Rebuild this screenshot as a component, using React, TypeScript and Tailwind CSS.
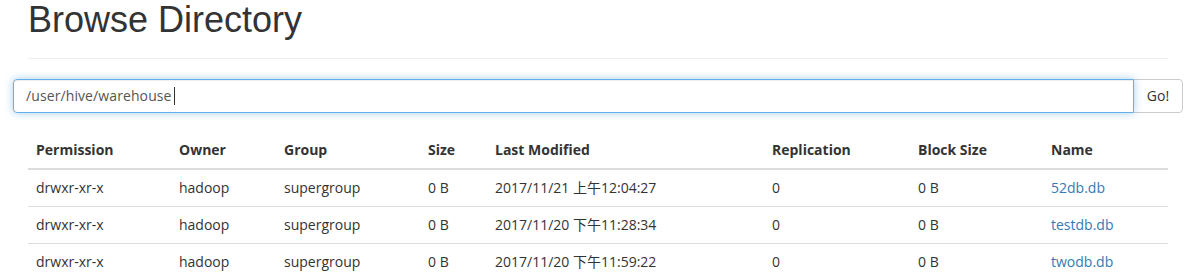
import React from 'react';

interface Entry {
  permission: string;
  owner: string;
  group: string;
  size: string;
  modified: string;
  replication: string;
  blockSize: string;
  name: string;
}

const entries: Entry[] = [
  { permission: 'drwxr-xr-x', owner: 'hadoop', group: 'supergroup', size: '0 B', modified: '2017/11/21 上午12:04:27', replication: '0', blockSize: '0 B', name: '52db.db' },
  { permission: 'drwxr-xr-x', owner: 'hadoop', group: 'supergroup', size: '0 B', modified: '2017/11/20 下午11:28:34', replication: '0', blockSize: '0 B', name: 'testdb.db' },
  { permission: 'drwxr-xr-x', owner: 'hadoop', group: 'supergroup', size: '0 B', modified: '2017/11/20 下午11:59:22', replication: '0', blockSize: '0 B', name: 'twodb.db' },
];

const bodyFont = "font-['Open_Sans','Noto_Sans_CJK_SC',sans-serif]";

const App: React.FC = () => {
  return (
    <div className={`w-[1189px] h-[278px] overflow-hidden bg-white text-[#333] ${bodyFont}`}>
      <div className="ml-[28px] w-[1140px]">
        {/* page header */}
        <div className="border-b border-[#eee] pb-[8px]">
          <h1 className="font-['Liberation_Sans',Arial,sans-serif] text-[36px] leading-[39.6px] font-medium mb-[10px]">
            Browse Directory
          </h1>
        </div>

        {/* path input */}
        <div className="-mx-[15px] mt-[20px] flex h-[34px]">
          <div className="flex-1 flex items-center rounded-l-[4px] border border-[#66afe9] px-[12px] text-[14px] tracking-[0.1px] text-[#555] shadow-[inset_0_1px_1px_rgba(0,0,0,0.075),0_0_8px_rgba(102,175,233,0.6)] z-10">
            <span>/user/hive/warehouse</span>
            <span className="ml-[2px] inline-block h-[18px] w-px bg-[#333]"></span>
          </div>
          <button className="-ml-px w-[50px] rounded-r-[4px] border border-[#ccc] bg-white text-[14px] text-[#333]">
            Go!
          </button>
        </div>

        {/* listing */}
        <table className="mt-[19px] w-[1140px] table-fixed border-collapse text-[14px] leading-[20px]">
          <colgroup>
            <col className="w-[143px]" />
            <col className="w-[105px]" />
            <col className="w-[144px]" />
            <col className="w-[67px]" />
            <col className="w-[277px]" />
            <col className="w-[146px]" />
            <col className="w-[133px]" />
            <col className="w-[125px]" />
          </colgroup>
          <thead>
            <tr className="border-b-2 border-[#ddd] text-left">
              <th className="p-[8px] font-bold">Permission</th>
              <th className="p-[8px] font-bold">Owner</th>
              <th className="p-[8px] font-bold">Group</th>
              <th className="p-[8px] font-bold">Size</th>
              <th className="p-[8px] font-bold">Last Modified</th>
              <th className="p-[8px] font-bold">Replication</th>
              <th className="p-[8px] font-bold">Block Size</th>
              <th className="p-[8px] font-bold">Name</th>
            </tr>
          </thead>
          <tbody>
            {entries.map((e) => (
              <tr key={e.name} className="border-t border-[#ddd]">
                <td className="p-[8px]">{e.permission}</td>
                <td className="p-[8px]">{e.owner}</td>
                <td className="p-[8px]">{e.group}</td>
                <td className="p-[8px]">{e.size}</td>
                <td className="p-[8px]">{e.modified}</td>
                <td className="p-[8px]">{e.replication}</td>
                <td className="p-[8px]">{e.blockSize}</td>
                <td className="p-[8px]">
                  <a href="#" className="text-[#337ab7]">{e.name}</a>
                </td>
              </tr>
            ))}
          </tbody>
        </table>
      </div>
    </div>
  );
};

export default App;
